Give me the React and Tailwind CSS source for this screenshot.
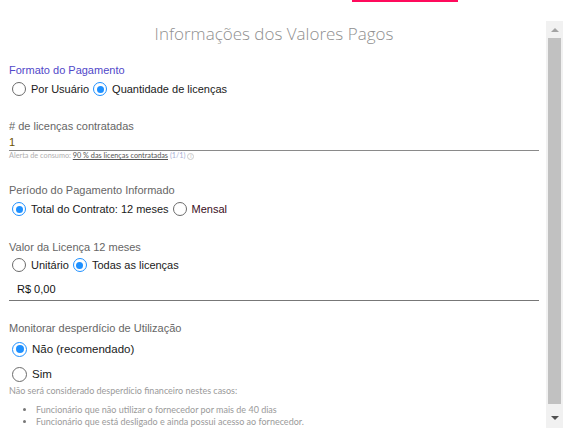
import React, { useState } from 'react'

const Radio = ({ checked, label, onClick, big, labelClass = 'text-[#1a1a1a]' }) => (
  <button onClick={onClick} className="flex items-center gap-[5px] h-[20px]">
    <span className={`${big ? 'w-[15px] h-[15px]' : 'w-[14px] h-[14px]'} rounded-full border-[1.5px] flex items-center justify-center ${checked ? 'border-[#1e90ff]' : 'border-[#6b6b6b]'}`}>
      {checked && <span className={`${big ? 'w-[8px] h-[8px]' : 'w-[7px] h-[7px]'} rounded-full bg-[#1e90ff]`} />}
    </span>
    <span className={`${big ? 'text-[11.5px]' : 'text-[11px]'} leading-[16px] ${labelClass}`}>{label}</span>
  </button>
)

const App = () => {
  const [formato, setFormato] = useState('qtd')
  const [periodo, setPeriodo] = useState('total')
  const [valor, setValor] = useState('todas')
  const [monitorar, setMonitorar] = useState('nao')

  return (
    <div className="w-[569px] h-[439px] bg-white overflow-hidden font-['Liberation_Sans',Arial,sans-serif]">
      <div className="h-[21px] pl-[352px]">
        <div className="w-[106px] h-[2px] bg-[#ff0a5c]" />
      </div>

      <div className="flex h-[407px]">
        <div className="w-[546px] pl-[9px] pr-[7px]">
          <h2 className="h-[26px] leading-[26px] text-center text-[17px] font-light text-[#8f8f8f] font-['Open_Sans',sans-serif]">Informações dos Valores Pagos</h2>

          <p className="mt-[15px] text-[11px] leading-[16px] text-[#5148c9]">Formato do Pagamento</p>
          <div className="mt-[1px] pl-[3px] flex items-center gap-[4px]">
            <Radio checked={formato === 'usuario'} onClick={() => setFormato('usuario')} label="Por Usuário" />
            <Radio checked={formato === 'qtd'} onClick={() => setFormato('qtd')} label="Quantidade de licenças" />
          </div>

          <p className="mt-[19px] text-[11px] leading-[16px] text-[#666]"># de licenças contratadas</p>
          <div className="h-[17px] border-b border-[#8a8a8a] text-[11px] leading-[16px] text-[#6b5200]">1</div>
          <p className="h-[10px] text-[7.3px] leading-[10px] text-[#b0b0b0] font-['Lato',sans-serif]">
            Alerta de consumo: <span className="underline text-[#555]">90 % das licenças contratadas</span> <span className="text-[#a9b1d6]">(1/1)</span> <span className="inline-flex w-[7px] h-[7px] rounded-full border border-[#ccc] text-[5px] leading-none items-center justify-center text-[#bbb]">i</span>
          </p>

          <p className="mt-[21px] text-[11px] leading-[16px] text-[#666]">Período do Pagamento Informado</p>
          <div className="mt-[1px] pl-[3px] flex items-center gap-[4px]">
            <Radio checked={periodo === 'total'} onClick={() => setPeriodo('total')} label="Total do Contrato: 12 meses" />
            <Radio checked={periodo === 'mensal'} onClick={() => setPeriodo('mensal')} label="Mensal" labelClass="text-[#3a0d1c]" />
          </div>

          <p className="mt-[20px] text-[11px] leading-[16px] text-[#666]">Valor da Licença 12 meses</p>
          <div className="pl-[3px] flex items-center gap-[4px]">
            <Radio checked={valor === 'unitario'} onClick={() => setValor('unitario')} label="Unitário" />
            <Radio checked={valor === 'todas'} onClick={() => setValor('todas')} label="Todas as licenças" />
          </div>
          <div className="mt-[6px] h-[20px] border-b border-[#777] pl-[8px] text-[11px] leading-[16px] text-[#111]">R$ 0,00</div>

          <p className="mt-[19px] text-[11px] leading-[16px] text-[#666]">Monitorar desperdício de Utilização</p>
          <div className="mt-[3px] pl-[3px]">
            <Radio big checked={monitorar === 'nao'} onClick={() => setMonitorar('nao')} label="Não (recomendado)" />
          </div>
          <div className="mt-[5px] pl-[3px]">
            <Radio big checked={monitorar === 'sim'} onClick={() => setMonitorar('sim')} label="Sim" />
          </div>

          <div className="font-['Lato',sans-serif] text-[9px] leading-[12px] text-[#9a9a9a]">
            <p className="mt-[1px]">Não será considerado desperdício financeiro nestes casos:</p>
            <ul className="mt-[7px] pl-[27px] list-disc marker:text-[#777]">
              <li>Funcionário que não utilizar o fornecedor por mais de 40 dias</li>
              <li>Funcionário que está desligado e ainda possui acesso ao fornecedor.</li>
            </ul>
          </div>
        </div>

        {/* scrollbar */}
        <div className="w-[17px] bg-[#f1f1f1] flex flex-col">
          <div className="h-[17px] flex items-center justify-center">
            <div className="w-0 h-0 border-l-[4px] border-r-[4px] border-b-[4px] border-l-transparent border-r-transparent border-b-[#a3a3a3]" />
          </div>
          <div className="flex-1 px-[2px]">
            <div className="h-[366px] bg-[#c1c1c1]" />
          </div>
          <div className="h-[24px] flex items-center justify-center pt-[3px]">
            <div className="w-0 h-0 border-l-[4px] border-r-[4px] border-t-[4px] border-l-transparent border-r-transparent border-t-[#505050]" />
          </div>
        </div>
      </div>
    </div>
  )
}

export default App
